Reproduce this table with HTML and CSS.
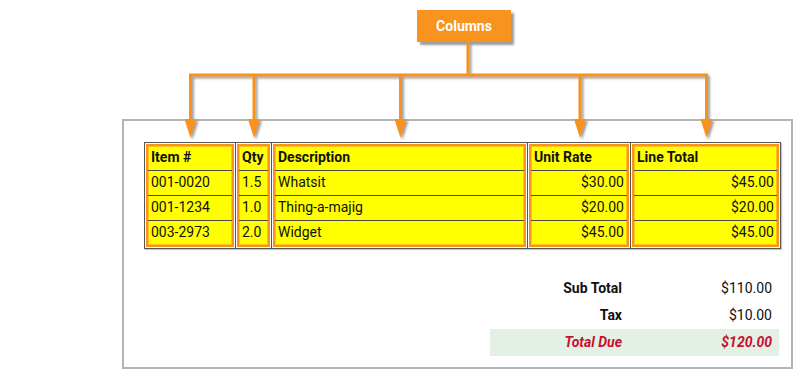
FILE: index.html
```html
<!DOCTYPE html>
<html>
<head>
<meta charset="utf-8">
<link rel="stylesheet" href="styles.css">
</head>
<body>
<div class="diagram">
  <div class="btn">Columns</div>
  <svg class="connectors" width="800" height="140" viewBox="0 0 800 140">
    <defs>
      <filter id="sh" x="-20%" y="-20%" width="140%" height="140%">
        <feDropShadow dx="2" dy="2" stdDeviation="0.8" flood-color="#777" flood-opacity="0.7"/>
      </filter>
    </defs>
    <g filter="url(#sh)" stroke="#f7931e" stroke-width="3" fill="none">
      <path d="M468 42 V75 M189 75 H708 M190.5 75 V122 M254 75 V122 M400.5 75 V122 M580 75 V122 M706.5 75 V122"/>
    </g>
    <g filter="url(#sh)" fill="#f7931e">
      <polygon points="184.5,119 196.5,119 190.5,138"/>
      <polygon points="248,119 260,119 254,138"/>
      <polygon points="394.5,119 406.5,119 400.5,138"/>
      <polygon points="574,119 586,119 580,138"/>
      <polygon points="700.5,119 712.5,119 706.5,138"/>
    </g>
  </svg>
</div>
<div class="box">
  <div class="table">
    <div class="wrap w-item">
      <div class="col">
        <div class="cell head">Item #</div>
        <div class="cell">001-0020</div>
        <div class="cell">001-1234</div>
        <div class="cell">003-2973</div>
      </div>
    </div>
    <div class="wrap w-qty">
      <div class="col">
        <div class="cell head">Qty</div>
        <div class="cell">1.5</div>
        <div class="cell">1.0</div>
        <div class="cell">2.0</div>
      </div>
    </div>
    <div class="wrap w-desc">
      <div class="col">
        <div class="cell head">Description</div>
        <div class="cell">Whatsit</div>
        <div class="cell">Thing-a-majig</div>
        <div class="cell">Widget</div>
      </div>
    </div>
    <div class="wrap w-rate">
      <div class="col">
        <div class="cell head">Unit Rate</div>
        <div class="cell num">$30.00</div>
        <div class="cell num">$20.00</div>
        <div class="cell num">$45.00</div>
      </div>
    </div>
    <div class="wrap w-total">
      <div class="col">
        <div class="cell head">Line Total</div>
        <div class="cell num">$45.00</div>
        <div class="cell num">$20.00</div>
        <div class="cell num">$45.00</div>
      </div>
    </div>
  </div>
  <div class="summary">
    <div class="srow">
      <div class="slabel">Sub Total</div>
      <div class="svalue">$110.00</div>
    </div>
    <div class="srow">
      <div class="slabel">Tax</div>
      <div class="svalue">$10.00</div>
    </div>
    <div class="srow due">
      <div class="slabel">Total Due</div>
      <div class="svalue">$120.00</div>
    </div>
  </div>
</div>
</body>
</html>
```

FILE: styles.css
```css
* { box-sizing: border-box; }
html, body { margin: 0; padding: 0; background: #fff; }
body {
  font-family: Roboto, "Liberation Sans", sans-serif;
  font-size: 14px;
  color: #111;
  width: 800px;
  height: 377px;
  overflow: hidden;
}
.diagram {
  position: relative;
  height: 119px;
  padding-top: 10px;
}
.btn {
  position: relative;
  z-index: 2;
  margin-left: 417px;
  width: 94px;
  height: 32px;
  background: #f7931e;
  color: #fff;
  font-weight: bold;
  font-size: 14px;
  display: flex;
  align-items: center;
  justify-content: center;
  box-shadow: 3px 3px 2px rgba(90, 90, 90, 0.6);
}
.connectors {
  position: absolute;
  left: 0;
  top: 0;
  z-index: 3;
}
.box {
  margin-left: 122px;
  width: 671px;
  height: 250px;
  border: 2px solid #b4b4b4;
  padding: 21px 0 0 20px;
}
.table {
  display: flex;
  width: 637px;
  border: 1px solid #555;
  box-shadow: 1px 1px 1px #c8c8c8;
}
.wrap {
  padding: 1px;
  border-right: 1px solid #555;
}
.wrap:last-child { border-right: none; }
.w-item { width: 91px; }
.w-qty { width: 36px; }
.w-desc { width: 256px; }
.w-rate { width: 103px; }
.w-total { width: 149px; }
.col {
  border: 2px solid #f7941d;
  background: #ffff00;
  box-shadow: inset 0 0 0 1px #ffc21a;
}
.cell {
  height: 25px;
  line-height: 23px;
  padding: 0 3px 0 3px;
  border-top: 1px solid #4a4a4a;
  white-space: nowrap;
}
.cell.head {
  height: 24px;
  line-height: 22px;
  border-top: none;
  font-weight: bold;
}
.cell.num { text-align: right; }
.summary {
  margin-top: 26px;
  margin-left: 346px;
  width: 289px;
}
.srow {
  display: grid;
  grid-template-columns: 140px 149px;
  height: 27px;
  line-height: 27px;
  font-size: 14px;
}
.slabel {
  text-align: right;
  padding-right: 8px;
  font-weight: bold;
}
.svalue {
  text-align: right;
  padding-right: 7px;
}
.srow.due {
  background: #e2f0e6;
  color: #c8102e;
  font-style: italic;
  font-weight: bold;
}
.srow.due .svalue { font-weight: bold; }
```
